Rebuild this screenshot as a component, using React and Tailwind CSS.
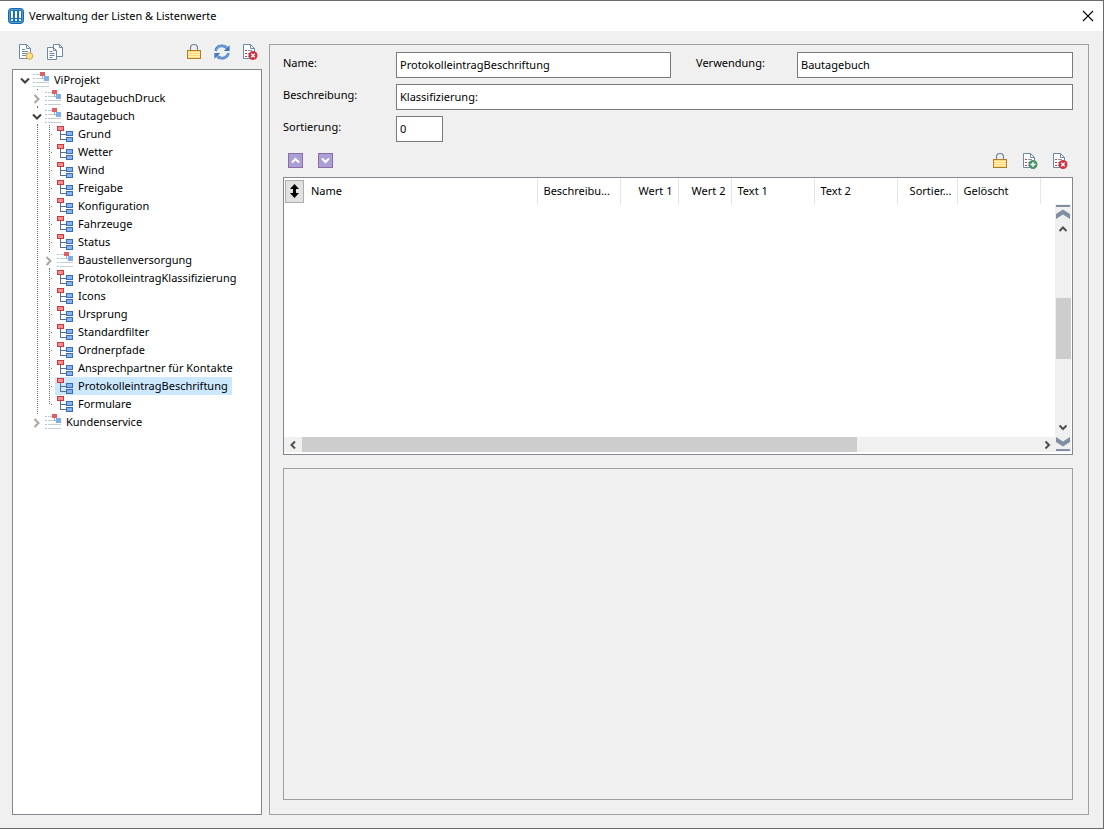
import React from "react";

const tree = [
  { label: "ViProjekt", depth: 0, state: "open" },
  { label: "BautagebuchDruck", depth: 1, state: "closed" },
  { label: "Bautagebuch", depth: 1, state: "open" },
  { label: "Grund", depth: 2 },
  { label: "Wetter", depth: 2 },
  { label: "Wind", depth: 2 },
  { label: "Freigabe", depth: 2 },
  { label: "Konfiguration", depth: 2 },
  { label: "Fahrzeuge", depth: 2 },
  { label: "Status", depth: 2 },
  { label: "Baustellenversorgung", depth: 2, state: "closed" },
  { label: "ProtokolleintragKlassifizierung", depth: 2 },
  { label: "Icons", depth: 2 },
  { label: "Ursprung", depth: 2 },
  { label: "Standardfilter", depth: 2 },
  { label: "Ordnerpfade", depth: 2 },
  { label: "Ansprechpartner für Kontakte", depth: 2 },
  { label: "ProtokolleintragBeschriftung", depth: 2, selected: true },
  { label: "Formulare", depth: 2, last: true },
  { label: "Kundenservice", depth: 1, state: "closed", last: true },
];

function AppIcon() {
  return (
    <svg width="16" height="16" viewBox="0 0 16 16" aria-hidden="true">
      <rect x="0.5" y="0.5" width="15" height="15" rx="3" fill="#1b74ba" stroke="#1767a8" />
      <rect x="1.5" y="1.5" width="13" height="13" rx="2" fill="none" stroke="#7db5df" strokeWidth="0.6" />
      <path d="M4 3v7M8 3v7M12 3v7" stroke="#fff" strokeWidth="2" />
      <path d="M4 11v2M8 11v2M12 11v2" stroke="#e3f0f9" strokeWidth="2" />
    </svg>
  );
}

function Page({ children, lines }) {
  return (
    <svg width="16" height="16" viewBox="0 0 16 16" aria-hidden="true">
      <path d="M1.5 0.5h7l4 4v10h-11z" fill="#fff" stroke="#6d8aa0" />
      <path d="M8.5 0.5v4h4" fill="none" stroke="#6d8aa0" />
      {lines}
      {children}
    </svg>
  );
}

function NewIcon() {
  return (
    <Page lines={<path d="M4 5.500h3M4 7.500h6M4 9.500h6M4 11.500h4" stroke="#6d8aa0" />}>
      <circle cx="11.500" cy="12" r="3.300" fill="#fbe08a" stroke="#cfa640" />
    </Page>
  );
}

function ListLines() {
  return (
    <>
      <path d="M3 6.5h2M3 9.5h2M3 12.5h2" stroke="#d23c46" />
      <path d="M6 6.5h4M6 9.5h3M6 12.5h2" stroke="#8396a8" />
    </>
  );
}

function DeleteIcon() {
  return (
    <Page lines={<ListLines />}>
      <circle cx="11" cy="11.5" r="4.5" fill="#cf3540" />
      <path d="M9.3 9.8l3.4 3.4M12.7 9.8l-3.4 3.4" stroke="#fff" strokeWidth="1.3" />
    </Page>
  );
}

function AddIcon() {
  return (
    <Page lines={<ListLines />}>
      <circle cx="11" cy="11.5" r="4.5" fill="#4c9367" />
      <path d="M8.5 11.5h5M11 9v5" stroke="#fff" strokeWidth="1.3" />
    </Page>
  );
}

function CopyIcon() {
  return (
    <svg width="16" height="16" viewBox="0 0 16 16" aria-hidden="true">
      <path d="M6.5 0.5h6l3 3v9h-9z" fill="#fff" stroke="#6d8aa0" />
      <path d="M12.5 0.5v3h3" fill="none" stroke="#6d8aa0" />
      <path d="M0.5 3.5h6l3 3v9h-9z" fill="#fff" stroke="#6d8aa0" />
      <path d="M6.5 3.5v3h3M2.5 7.5h3M2.5 9.5h5M2.5 11.5h5M2.5 13.5h3" fill="none" stroke="#6d8aa0" />
    </svg>
  );
}

function LockIcon() {
  return (
    <svg width="16" height="16" viewBox="0 0 16 16" aria-hidden="true">
      <path d="M4.5 7V4a3.5 3.5 0 0 1 7 0v3" fill="none" stroke="#75879b" strokeWidth="1.2" />
      <rect x="1.5" y="6.5" width="13" height="8" fill="#fbd877" stroke="#b27d2c" />
      <path d="M2 8.5h12M2 10.5h12M2 12.5h12" stroke="#fff0b4" />
    </svg>
  );
}

function RefreshIcon() {
  return (
    <svg width="16" height="16" viewBox="0 0 16 16" aria-hidden="true">
      <path d="M1.600 7A6.500 6 0 0 1 13 4" fill="none" stroke="#3f78bd" strokeWidth="2.6" />
      <path d="M1.600 7A6.500 6 0 0 1 13 4" fill="none" stroke="#8ab4e8" strokeWidth="1" />
      <path d="M15.600 1.200v5.800H9.800z" fill="#3f78bd" />
      <path d="M14.400 9A6.500 6 0 0 1 3 12" fill="none" stroke="#3f78bd" strokeWidth="2.6" />
      <path d="M14.400 9A6.500 6 0 0 1 3 12" fill="none" stroke="#8ab4e8" strokeWidth="1" />
      <path d="M0.400 14.800V9h5.800z" fill="#3f78bd" />
    </svg>
  );
}

function MoveIcon({ down }) {
  return (
    <svg width="15" height="15" viewBox="0 0 15 15" aria-hidden="true">
      <rect x="0.5" y="0.5" width="14" height="14" fill="#aaa0d6" stroke="#8c6ba8" />
      <path d={down ? "M4 5.5l3.5 3.5L11 5.5" : "M4 9.5L7.5 6L11 9.5"} fill="none" stroke="#fff" strokeWidth="2" />
    </svg>
  );
}

function GroupIcon() {
  return (
    <svg width="16" height="16" viewBox="0 0 16 16" shapeRendering="crispEdges" aria-hidden="true">
      <path d="M0 2.5h2M0 6.5h2M0 10.5h2M0 14.5h2" stroke="#a5c6ea" />
      <path d="M3 2.5h5M3 6.5h8M3 10.5h13M3 14.5h13" stroke="#c3cfd3" />
      <rect x="7" y="0" width="5" height="4" fill="#df5f66" />
      <rect x="11" y="4" width="5" height="5" fill="#81aee6" />
      <path d="M9.5 4v2.500h1.500" fill="none" stroke="#9fb2c4" />
    </svg>
  );
}

function LeafIcon() {
  return (
    <svg width="16" height="16" viewBox="0 0 16 16" shapeRendering="crispEdges" aria-hidden="true">
      <path d="M3.500 5v8.500h6M3.500 8.500h6" fill="none" stroke="#58708f" />
      <rect x="0.5" y="0.5" width="6" height="4" fill="#fa8a8c" stroke="#c43c40" />
      <rect x="9.500" y="5.500" width="6" height="4" fill="#86b4f0" stroke="#3a6cb4" />
      <rect x="9.500" y="11.500" width="6" height="4" fill="#86b4f0" stroke="#3a6cb4" />
    </svg>
  );
}

function Guides({ item }) {
  const { depth, state, last } = item;
  const own = depth * 12 + 6.5;
  return (
    <svg
      width={(depth + 1) * 12}
      height="18"
      className="shrink-0"
      fill="none"
      aria-hidden="true"
    >
      <g stroke="#6e6e6e" strokeDasharray="1 1" shapeRendering="crispEdges">
        {depth === 2 && <path d="M18.500 0v18" />}
        {!state && <path d={last ? `M${own} 0v10` : `M${own} 0v18`} />}
        {!state && <path d={`M${own + 1.5} 9.500h1`} />}
        {state && depth > 0 && <path d={`M${own} 0v1`} />}
        {state && depth > 0 && !last && <path d={`M${own} 17v1`} />}
      </g>
      {state === "open" && (
        <path d={`M${own - 4.5} 7.500l4 4l4 -4`} stroke="#404040" strokeWidth="2" />
      )}
      {state === "closed" && (
        <path d={`M${own - 3} 6l4 4l-4 4`} stroke="#a6a6a6" strokeWidth="2" />
      )}
    </svg>
  );
}

function IconButton({ label, children }) {
  return (
    <button type="button" aria-label={label} className="flex size-4 items-center justify-center">
      {children}
    </button>
  );
}

function Chevron({ dir }) {
  const d = {
    up: "M4.500 10L8 6.500L11.500 10",
    down: "M4.500 6.500L8 10L11.500 6.500",
    left: "M10 4.500L6.500 8L10 11.500",
    right: "M6.500 4.500L10 8L6.500 11.500",
  }[dir];
  return (
    <svg width="16" height="16" viewBox="0 0 16 16" fill="none" aria-hidden="true">
      <path d={d} stroke="#505050" strokeWidth="2" />
    </svg>
  );
}

function EndIcon({ down }) {
  return (
    <svg width="16" height="16" viewBox="0 0 16 16" aria-hidden="true">
      {down ? (
        <>
          <path d="M1 1l7 4.500l7-4.500v5l-7 4.500l-7-4.500z" fill="#7f8ea0" />
          <rect x="1" y="13" width="14" height="2" fill="#7f8ea0" />
        </>
      ) : (
        <>
          <rect x="1" y="1" width="14" height="2" fill="#7f8ea0" />
          <path d="M1 15l7-4.500l7 4.500v-5l-7-4.500l-7 4.500z" fill="#7f8ea0" />
        </>
      )}
    </svg>
  );
}

const field =
  "w-full border border-[#7a7a7a] bg-white pl-[3px] pb-[2px] outline-none rounded-none";

const columns = [
  { label: "Name", align: "pl-1.5 text-left" },
  { label: "Beschreibu...", align: "pl-1.5 text-left" },
  { label: "Wert 1", align: "pr-[5px] text-right" },
  { label: "Wert 2", align: "pr-[5px] text-right" },
  { label: "Text 1", align: "pl-1.5 text-left" },
  { label: "Text 2", align: "pl-1.5 text-left" },
  { label: "Sortier...", align: "pr-[5px] text-right" },
  { label: "Gelöscht", align: "pl-1.5 text-left" },
];

function Sidebar() {
  return (
    <aside className="flex w-[250px] shrink-0 flex-col">
      <div className="flex h-[25px] items-start pl-1.5 pr-1">
        <div className="flex gap-[13px]">
          <IconButton label="Neu"><NewIcon /></IconButton>
          <IconButton label="Kopieren"><CopyIcon /></IconButton>
        </div>
        <div className="ml-auto flex gap-3">
          <IconButton label="Sperren"><LockIcon /></IconButton>
          <IconButton label="Aktualisieren"><RefreshIcon /></IconButton>
          <IconButton label="Löschen"><DeleteIcon /></IconButton>
        </div>
      </div>
      <ul role="tree" aria-label="Listen" className="flex-1 border border-[#828790] bg-white pl-1.5 pt-px">
        {tree.map((item) => (
          <li
            key={item.label}
            role="treeitem"
            aria-level={item.depth + 1}
            aria-selected={!!item.selected}
            aria-expanded={item.state ? item.state === "open" : undefined}
            className="flex h-[18px]"
          >
            <Guides item={item} />
            <span
              className={
                "flex items-center gap-[5px] whitespace-nowrap pl-0.5 pr-1 " +
                (item.selected ? "bg-[#cce8ff]" : "")
              }
            >
              {item.state ? <GroupIcon /> : <LeafIcon />}
              {item.label}
            </span>
          </li>
        ))}
      </ul>
    </aside>
  );
}

function Form() {
  return (
    <form className="grid grid-cols-[113px_275fr_126px_276fr] gap-y-1.5">
      <label htmlFor="name" className="pt-[3px]">Name:</label>
      <input id="name" className={field + " h-[26px]"} defaultValue="ProtokolleintragBeschriftung" />
      <label htmlFor="usage" className="pl-[25px] pt-[3px]">Verwendung:</label>
      <input id="usage" className={field + " h-[26px]"} defaultValue="Bautagebuch" />
      <label htmlFor="description" className="pt-[3px]">Beschreibung:</label>
      <input id="description" className={field + " col-span-3 h-[26px]"} defaultValue="Klassifizierung:" />
      <label htmlFor="order" className="pt-[3px]">Sortierung:</label>
      <div className="col-span-3 flex w-[47px]">
        <input id="order" className={field + " h-[26px]"} defaultValue="0" />
      </div>
    </form>
  );
}

function ValueTable() {
  return (
    <div className="flex h-[278px] flex-col border border-[#828790] bg-white pb-0.5 pr-px">
      <table className="w-full table-fixed border-collapse">
        <colgroup>
          <col className="w-[21px]" />
          <col className="w-[232px]" />
          <col className="w-[83px]" />
          <col className="w-[58px]" />
          <col className="w-[53px]" />
          <col className="w-[83px]" />
          <col className="w-[83px]" />
          <col className="w-[60px]" />
          <col className="w-[83px]" />
          <col />
        </colgroup>
        <thead>
          <tr className="h-[26px]">
            <th className="p-0 pl-px">
              <button
                type="button"
                aria-label="Sortieren"
                className="flex h-[23px] w-[19px] items-center justify-center border border-[#adadad] bg-[#e1e1e1]"
              >
                <svg width="11" height="14" viewBox="0 0 11 14" aria-hidden="true">
                  <path d="M5.500 0l4.500 5h-3v4h3l-4.500 5l-4.500-5h3v-4h-3z" fill="#000" />
                </svg>
              </button>
            </th>
            {columns.map((c) => (
              <th
                key={c.label}
                scope="col"
                className={"whitespace-nowrap border-r border-[#e5e5e5] p-0 font-normal " + c.align}
              >
                {c.label}
              </th>
            ))}
            <td />
          </tr>
        </thead>
      </table>
      <div className="flex min-h-0 flex-1">
        <div className="flex flex-1 flex-col">
          <div className="flex-1" />
          <div className="flex h-[15px] items-center bg-[#f0f0f0]">
            <button type="button" aria-label="Nach links" className="w-[18px] shrink-0 pl-px"><Chevron dir="left" /></button>
            <div className="h-[15px] w-[72%] bg-[#cdcdcd]" />
            <button type="button" aria-label="Nach rechts" className="ml-auto"><Chevron dir="right" /></button>
          </div>
        </div>
        <div className="flex w-4 flex-col items-center bg-[#f0f0f0]">
          <button type="button" aria-label="Zum Anfang"><EndIcon /></button>
          <button type="button" aria-label="Nach oben" className="pt-px"><Chevron dir="up" /></button>
          <div className="flex w-full flex-1 flex-col items-center">
            <div className="flex-1" />
            <div className="h-[61px] w-[15px] bg-[#cdcdcd]" />
            <div className="flex-1" />
          </div>
          <button type="button" aria-label="Nach unten" className="pb-px"><Chevron dir="down" /></button>
          <button type="button" aria-label="Zum Ende"><EndIcon down /></button>
        </div>
      </div>
    </div>
  );
}

export default function App() {
  return (
    <div className="flex min-h-screen flex-col pb-px font-['Noto_Sans','Open_Sans',sans-serif] text-[11px] leading-4 text-black [&_svg]:block [&_svg]:shrink-0">
      <div className="flex flex-1 flex-col border-b border-r border-t border-[#6b6b6b] bg-[#f0f0f0]">
        <header className="flex h-[30px] items-center bg-white pl-2 pr-[9px]">
          <AppIcon />
          <h1 className="pl-[5px]">Verwaltung der Listen &amp; Listenwerte</h1>
          <button type="button" aria-label="Schließen" className="ml-auto">
            <svg width="12" height="12" viewBox="0 0 12 12" aria-hidden="true">
              <path d="M1 1l10 10M11 1L1 11" stroke="#000" strokeWidth="1.1" />
            </svg>
          </button>
        </header>
        <div className="flex flex-1 gap-[7px] pb-[13px] pl-3 pr-3.5 pt-[13px]">
          <Sidebar />
          <main className="flex min-w-0 flex-1 flex-col border border-[#a0a0a0] pb-3.5 pl-[13px] pr-[15px] pt-[7px]">
            <Form />
            <div className="flex h-[35px] items-center pl-1 pr-[5px] pt-0.5">
              <div className="flex gap-3.5">
                <IconButton label="Nach oben verschieben"><MoveIcon /></IconButton>
                <IconButton label="Nach unten verschieben"><MoveIcon down /></IconButton>
              </div>
              <div className="ml-auto flex gap-3.5">
                <IconButton label="Eintrag sperren"><LockIcon /></IconButton>
                <IconButton label="Eintrag hinzufügen"><AddIcon /></IconButton>
                <IconButton label="Eintrag löschen"><DeleteIcon /></IconButton>
              </div>
            </div>
            <ValueTable />
            <section aria-label="Details" className="mt-[13px] flex-1 border border-[#a0a0a0]" />
          </main>
        </div>
      </div>
    </div>
  );
}
